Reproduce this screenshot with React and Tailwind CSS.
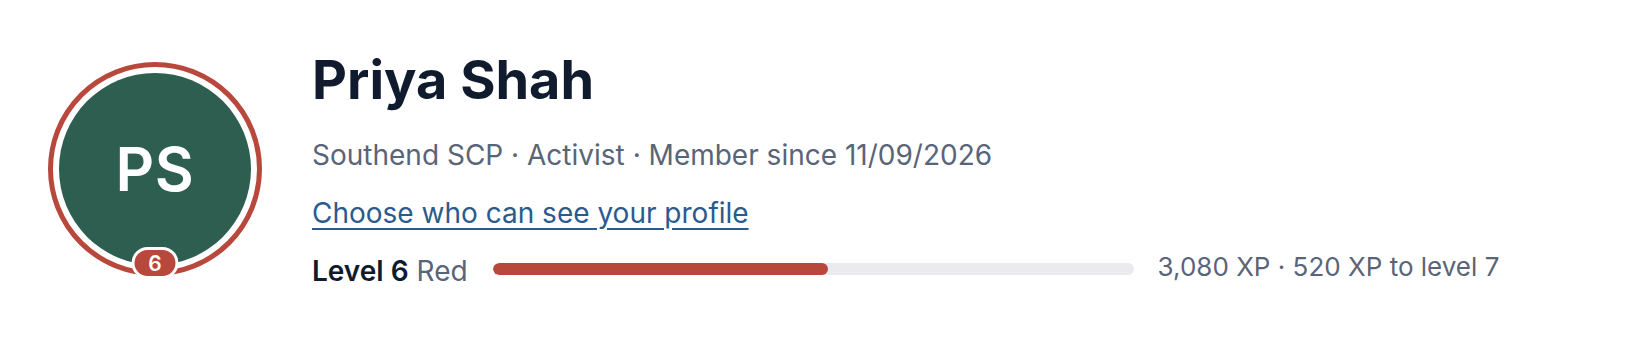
import React from 'react';

const member = {
  initials: 'PS',
  name: 'Priya Shah',
  branch: 'Southend SCP',
  role: 'Activist',
  since: '11/09/2026',
  level: 6,
  levelName: 'Red',
  xp: 3080,
  toNext: 520,
  progress: 52.4,
};

function Avatar({ initials, level }) {
  return (
    <div className="relative shrink-0">
      <div className="rounded-full border-[5px] border-[#b9483c] bg-white p-[6px]">
        <div className="flex h-[192px] w-[192px] items-center justify-center rounded-full bg-[#2e5e4f]">
          <span className="text-[60px] font-semibold leading-none tracking-[0.01em] text-white">{initials}</span>
        </div>
      </div>
      <div className="absolute -bottom-[3px] left-1/2 -translate-x-1/2">
        <div className="flex h-[32px] w-[47px] items-center justify-center rounded-full border-[3px] border-white bg-[#b9483c] text-[21px] font-semibold leading-none text-white">
          {level}
        </div>
      </div>
    </div>
  );
}

export default function App() {
  const fmt = (n) => n.toLocaleString('en-GB');

  return (
    <div className="flex h-[338px] w-full items-center bg-white px-12 font-['Inter',sans-serif]">
      <Avatar initials={member.initials} level={member.level} />

      <div className="ml-[50px] flex flex-col">
        <h1 className="text-[54px] font-bold leading-[60px] text-[#101b2e]">{member.name}</h1>
        <p className="mt-[28px] text-[28px] leading-[34px] text-[#5a6478]">
          {member.branch} · {member.role} · Member since {member.since}
        </p>
        <a href="#" className="mt-[24px] self-start text-[28px] leading-[34px] text-[#2b5a8e] underline underline-offset-[5px]">
          Choose who can see your profile
        </a>
        <div className="mt-[20px] flex items-center">
          <div className="pt-[4px] text-[28px] leading-[34px]">
            <span className="font-semibold text-[#101b2e]">Level {member.level}</span>{' '}
            <span className="text-[#5a6478]">{member.levelName}</span>
          </div>
          <div className="ml-[25px] h-[12px] w-[641px] overflow-hidden rounded-full bg-[#ebebef]">
            <div className="h-full rounded-full bg-[#b9483c]" style={{ width: `${member.progress}%` }} />
          </div>
          <div className="ml-[24px] pb-[5px] text-[26px] leading-[34px] text-[#5a6478]">
            {fmt(member.xp)} XP · {member.toNext} XP to level {member.level + 1}
          </div>
        </div>
      </div>
    </div>
  );
}
